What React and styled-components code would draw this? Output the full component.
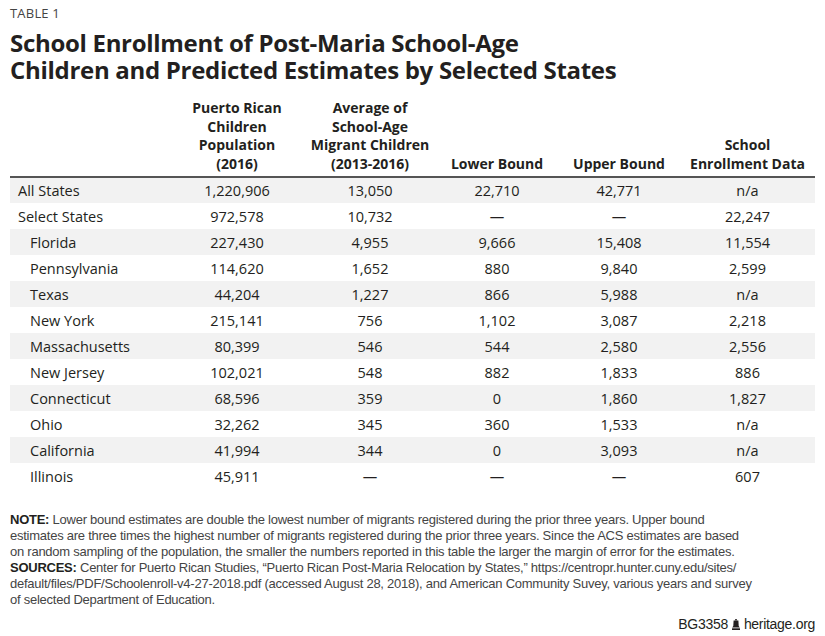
import styled, { createGlobalStyle } from "styled-components";

const GlobalStyle = createGlobalStyle`
  body {
    margin: 0;
    background: #fff;
    color: #231f20;
    font-family: "Open Sans", "Liberation Sans", sans-serif;
  }
`;

const Page = styled.div`
  width: 825px;
  height: 636px;
  box-sizing: border-box;
  padding: 5px 10px 0 10px;
  display: flex;
  flex-direction: column;
`;

const Kicker = styled.div`
  font-size: 13px;
  line-height: 16px;
  color: #444;
  letter-spacing: 0.2px;
`;

const Title = styled.h1`
  margin: 8px 0 0 0;
  font-size: 24px;
  line-height: 27px;
  font-weight: 700;
  letter-spacing: -0.3px;
  color: #231f20;
`;

const Table = styled.table`
  margin-top: 16px;
  width: 805px;
  border-collapse: collapse;
  table-layout: fixed;
  font-size: 14.5px;
`;

const Th = styled.th`
  width: ${(p) => p.$w}px;
  font-weight: 700;
  font-size: 14px;
  line-height: 18.5px;
  vertical-align: bottom;
  text-align: center;
  padding: 0 0 3px 0;
  border-bottom: 2px solid #555;
`;

const Row = styled.tr`
  background: ${(p) => (p.$shade ? "#f2f2f2" : "#fff")};
  height: 26px;
`;

const Label = styled.td`
  padding: 0 0 0 ${(p) => (p.$indent ? 20 : 8)}px;
  white-space: nowrap;
`;

const Cell = styled.td`
  text-align: center;
  padding: 0;
`;

const Notes = styled.div`
  margin-top: 23px;
  font-family: "Liberation Sans", Arial, sans-serif;
  font-size: 13px;
  line-height: 16px;
  letter-spacing: -0.25px;
  color: #444;
  b {
    color: #231f20;
    font-weight: 700;
  }
`;

const NoteLine = styled.div`
  white-space: nowrap;
`;

const Footer = styled.div`
  margin-top: auto;
  margin-bottom: 4px;
  align-self: flex-end;
  display: flex;
  align-items: center;
  gap: 4px;
  font-family: "Liberation Sans", Arial, sans-serif;
  font-size: 14px;
  letter-spacing: -0.3px;
  line-height: 16px;
  color: #231f20;
`;

const heads = [
  { w: 160, text: "" },
  { w: 134, text: ["Puerto Rican", "Children", "Population", "(2016)"] },
  { w: 132, text: ["Average of", "School-Age", "Migrant Children", "(2013-2016)"] },
  { w: 122, text: ["Lower Bound"] },
  { w: 122, text: ["Upper Bound"] },
  { w: 135, text: ["School", "Enrollment Data"] },
];

const D = "—";
const rows = [
  ["All States", "1,220,906", "13,050", "22,710", "42,771", "n/a"],
  ["Select States", "972,578", "10,732", D, D, "22,247"],
  ["Florida", "227,430", "4,955", "9,666", "15,408", "11,554", true],
  ["Pennsylvania", "114,620", "1,652", "880", "9,840", "2,599", true],
  ["Texas", "44,204", "1,227", "866", "5,988", "n/a", true],
  ["New York", "215,141", "756", "1,102", "3,087", "2,218", true],
  ["Massachusetts", "80,399", "546", "544", "2,580", "2,556", true],
  ["New Jersey", "102,021", "548", "882", "1,833", "886", true],
  ["Connecticut", "68,596", "359", "0", "1,860", "1,827", true],
  ["Ohio", "32,262", "345", "360", "1,533", "n/a", true],
  ["California", "41,994", "344", "0", "3,093", "n/a", true],
  ["Illinois", "45,911", D, D, D, "607", true],
];

function Bell() {
  return (
    <svg width="8" height="11" viewBox="0 0 8 11">
      <rect x="3.2" y="0" width="1.6" height="1.5" fill="#231f20" />
      <path d="M1.6 1.5 H6.4 L6.7 7 L7.8 8.6 H0.2 L1.3 7 Z" fill="#231f20" />
      <rect x="0" y="9.3" width="8" height="1.7" fill="#231f20" />
    </svg>
  );
}

export default function App() {
  return (
    <Page>
      <GlobalStyle />
      <Kicker>TABLE 1</Kicker>
      <Title>
        School Enrollment of Post-Maria School-Age
        <br />
        Children and Predicted Estimates by Selected States
      </Title>
      <Table>
        <thead>
          <tr>
            {heads.map((h, i) => (
              <Th key={i} $w={h.w}>
                {Array.isArray(h.text)
                  ? h.text.map((t, j) => <div key={j}>{t}</div>)
                  : h.text}
              </Th>
            ))}
          </tr>
        </thead>
        <tbody>
          {rows.map((r, i) => (
            <Row key={r[0]} $shade={i % 2 === 0}>
              <Label $indent={r[6]}>{r[0]}</Label>
              {r.slice(1, 6).map((v, j) => (
                <Cell key={j}>{v}</Cell>
              ))}
            </Row>
          ))}
        </tbody>
      </Table>
      <Notes>
        <NoteLine>
          <b>NOTE:</b> Lower bound estimates are double the lowest number of migrants registered during the prior three years. Upper bound
        </NoteLine>
        <NoteLine>
          estimates are three times the highest number of migrants registered during the prior three years. Since the ACS estimates are based
        </NoteLine>
        <NoteLine>
          on random sampling of the population, the smaller the numbers reported in this table the larger the margin of error for the estimates.
        </NoteLine>
        <NoteLine>
          <b>SOURCES:</b> Center for Puerto Rican Studies, “Puerto Rican Post-Maria Relocation by States,” https://centropr.hunter.cuny.edu/sites/
        </NoteLine>
        <NoteLine>
          default/files/PDF/Schoolenroll-v4-27-2018.pdf (accessed August 28, 2018), and American Community Suvey, various years and survey
        </NoteLine>
        <NoteLine>of selected Department of Education.</NoteLine>
      </Notes>
      <Footer>
        BG3358 <Bell /> heritage.org
      </Footer>
    </Page>
  );
}
